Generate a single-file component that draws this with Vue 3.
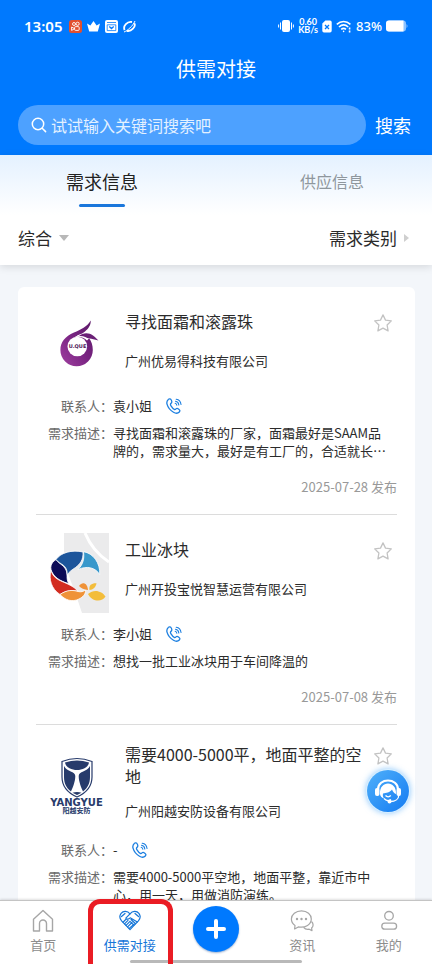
<template>
  <div class="page">
    <header class="header">
      <div class="status">
        <div class="status-side">
          <span class="time">13:05</span>
          <svg width="13" height="13" viewBox="0 0 13 13">
            <rect width="13" height="13" rx="2.5" fill="#e2502f" />
            <g fill="none" stroke="#fff" stroke-width=".9">
              <circle cx="5" cy="4" r="1.5" />
              <circle cx="8.6" cy="3.8" r="1.6" />
              <rect x="5.6" y="6.6" width="4.6" height="3.8" rx="1" />
              <path d="M2.6 7l3 1.7-3 1.7z" />
            </g>
          </svg>
          <svg width="13" height="13" viewBox="0 0 13 13" fill="#fff">
            <path d="M0 3.4l3.4 2L6.5 1l3.1 4.4 3.4-2-2.2 8.1H2.2z" />
          </svg>
          <svg width="13" height="13" viewBox="0 0 13 13">
            <rect width="13" height="13" rx="2" fill="#fff" />
            <path d="M2 2.5h9M2.2 4.8h8.6v5.8H2.2z" fill="none" stroke="#0079fe" stroke-width=".8" />
            <path d="M4.3 6.5l2.2 2 2.2-2" fill="none" stroke="#0079fe" stroke-width="1.3" />
          </svg>
          <svg width="13" height="13" viewBox="0 0 13 13" fill="none" stroke="#fff" stroke-width="1.8">
            <path d="M1.6 10C-.3 6 4.4 1 9 2M11.3 3.2c2 3.4-3 8.8-7.6 7.6" />
            <path d="M1 12c3-1 9-6 11-11" stroke-width="1" />
          </svg>
        </div>
        <div class="status-side status-right">
          <svg width="16" height="14" viewBox="0 0 16 14" fill="#fff">
            <rect x="4" y="1" width="8" height="12" rx="2" />
            <path d="M2.5 3.5v7M.6 5.5v3M13.5 3.5v7M15.4 5.5v3" stroke="#fff" stroke-width="1" />
          </svg>
          <span class="speed"><span>0.60</span><span>KB/s</span></span>
          <svg width="10" height="13" viewBox="0 0 10 13">
            <path d="M3.4.5H8A1.7 1.7 0 0 1 9.7 2.2v8.6A1.7 1.7 0 0 1 8 12.5H2A1.7 1.7 0 0 1 .3 10.8V3.6z" fill="#fff" />
            <path d="M3 5l4 4M7 5L3 9" stroke="#0079fe" stroke-width="1.3" />
          </svg>
          <svg width="16" height="13" viewBox="0 0 16 13" fill="none" stroke="#fff" stroke-width="1.6">
            <path d="M.8 4.3c4-3.7 9.6-3.7 13.6 0M3 7c2.8-2.6 6.4-2.6 9.2 0M5.2 9.4c1.5-1.3 3.3-1.3 4.8 0" />
            <circle cx="7.6" cy="11.4" r=".8" fill="#fff" stroke="none" />
            <path d="M13.6 7.5v2M13.6 10.5v2" />
          </svg>
          <span class="percent">83%</span>
          <svg width="22" height="12" viewBox="0 0 22 12">
            <rect x="0" y=".5" width="20" height="11" rx="3" fill="#8cc2ff" />
            <path d="M3 .5h14.5v11H3a3 3 0 0 1-3-3v-5a3 3 0 0 1 3-3z" fill="#fff" />
            <path d="M20.5 4a2.5 2.5 0 0 1 0 4z" fill="#8cc2ff" />
          </svg>
        </div>
      </div>
      <h1 class="page-title">供需对接</h1>
      <form class="search" @submit.prevent>
        <label class="search-box">
          <svg width="16" height="16" viewBox="0 0 16 16" fill="none" stroke="#fff" stroke-width="1.5" stroke-linecap="round">
            <circle cx="7" cy="7" r="5.7" />
            <path d="M11.2 11.2L14.6 14.6" />
          </svg>
          <input v-model="keyword" type="text" aria-label="搜索" placeholder="试试输入关键词搜索吧" />
        </label>
        <button class="search-button" type="submit">搜索</button>
      </form>
    </header>

    <section class="filters">
      <div class="tabs">
        <button
          v-for="(tab, index) in tabs"
          :key="tab"
          type="button"
          class="tab"
          :class="{ active: activeTab === index }"
          @click="activeTab = index"
        >
          {{ tab }}
        </button>
      </div>
      <div class="filter-row">
        <button type="button" class="filter">综合<i class="arrow-down"></i></button>
        <button type="button" class="filter">需求类别<i class="arrow-right"></i></button>
      </div>
    </section>

    <main class="content">
      <div class="card">
        <article v-for="item in items" :key="item.title" class="item">
          <div class="item-head">
            <svg v-if="item.logo === 'uque'" class="logo" viewBox="0 0 73 80">
              <defs>
                <linearGradient id="uque" x1="0" x2="1" y1="1" y2="0">
                  <stop offset="0" stop-color="#a040a0" />
                  <stop offset=".5" stop-color="#792482" />
                  <stop offset="1" stop-color="#5c1a68" />
                </linearGradient>
              </defs>
              <!-- flame and ring -->
              <path
                fill="url(#uque)"
                d="M54.7 15.5C51 22 45 24.5 38 27.5C29 31.5 24.4 37 24.4 45A16.2 16.2 0 0 0 56.8 45C56.8 40 55.5 36 52.5 32.5L46 31.5C44 30.5 41 30.8 38.500 32C42 30 46 29.5 49 26.5C52.500 23.500 55 20 54.7 15.5z"
              />
              <circle cx="41.3" cy="41.5" r="9.8" fill="#fff" />
              <path d="M38 32.500C41 30.500 44 29.500 46 28.800L53.500 33L51 35.500C47 31.500 42 31 38 32.500z" fill="#fff" />
              <path d="M43 31C47 27.500 53 27.500 57 30.500C59.500 32.300 60.500 34 62.500 35.500C58 34 56 34 53.500 33.500C50 33 48 30.500 43 31z" fill="#6a2076" />
              <text x="41.5" y="43" class="uque-text" text-anchor="middle">U.QUE</text>
            </svg>
            <svg v-else-if="item.logo === 'kaitou'" class="logo" viewBox="0 0 73 80">
              <path d="M28 0h45v80H46L40 62 28 30z" fill="#ebebec" />
              <path d="M49 0c5 12 13 22 24 29" fill="none" stroke="#fff" stroke-width="3" />
              <g stroke="#fff" stroke-width=".8">
                <path d="M20 26.500C14.500 30 13.500 35 16.500 40C20 46 27 49 32.800 50.500C29.500 45.500 32.500 41.500 29.500 36C27 31.500 23 31 20 26.500z" fill="#0c0b57" />
                <path d="M20 26.500C25 19.500 36 16.500 47 19C47.500 27 44 31 39.500 34.500C36 37 33 38.500 31.300 42C31.500 31 24 32 20 26.500z" fill="#1c559b" />
                <path d="M47.500 18.700C57 20 64.500 30 63.700 41.500C59.500 34.500 51 32.500 42 36.500C47 31.500 48.500 26 47.500 18.700z" fill="#3898cb" />
                <path d="M15 37.500C18.500 50 32 47.500 42 58C34 57 30 58 24 61.500C15.500 56 12.500 46.500 15 37.500z" fill="#d22c20" />
                <path d="M24 61.500C31 56.500 37 57 42 58.500C45 59.300 47.500 58.500 49.500 57C50 61 47 64 43 66C36 69.500 29 67 24 61.500z" fill="#ef9238" />
              </g>
              <path d="M43 53C46 49 51 49 52 57C48 56.500 45 55.500 43 53z" fill="#ef9238" />
              <path d="M53.500 57C52.500 52 56 50 60.500 50.300C60 54 57 57 53.500 57z" fill="#f3bd3b" />
              <path d="M52 61C58 55.500 66 58 69.500 63.500C66 69.500 56 69 52 61z" fill="#f3bd3b" />
            </svg>
            <svg v-else class="logo" viewBox="0 0 73 80">
              <path d="M41 15.500C46 15.500 51 16.500 56 18.500V34C56 44 50 50 41 54C32 50 26 44 26 34V18.500C31 16.500 36 15.500 41 15.500z" fill="#fff" stroke="#273b6b" stroke-width="1.2" />
              <path d="M29 19.500C37 16.800 45 16.800 53 19.500C52 25 46 27 41 27S30 25 29 19.500z" fill="#273b6b" />
              <path d="M28 23C31 29 39.300 28 39.300 33C39.300 39 36.500 45 35 48.500C30 44.500 28 40 28 34z" fill="#273b6b" />
              <path d="M54 23C51 29 42.700 28 42.700 33C42.700 39 45.500 45 47 48.500C52 44.500 54 40 54 34z" fill="#273b6b" />
              <path d="M36.500 49.800C39 48.800 43 48.800 45.500 49.800L41 52z" fill="#273b6b" />
              <text x="40.500" y="62.500" class="yue-text" text-anchor="middle">YANGYUE</text>
              <text x="40.500" y="69.500" class="yue-sub" text-anchor="middle">阳越安防</text>
            </svg>
            <div class="item-info">
              <div class="title-row">
                <h2 class="title">{{ item.title }}</h2>
                <button type="button" class="star" aria-label="收藏">
                  <svg width="18" height="18" viewBox="0 0 18 18" fill="none" stroke="#c3c3c3" stroke-width="1.3" stroke-linejoin="round">
                    <path d="M9 .9l2.500 5.200 5.800.8-4.200 4.100 1 5.900L9 14.100l-5.100 2.800 1-5.900L.7 6.900l5.800-.8z" />
                  </svg>
                </button>
              </div>
              <p class="company">{{ item.company }}</p>
            </div>
          </div>
          <div class="row">
            <span class="label">联系人：</span>
            <span>{{ item.contact }}</span>
            <button type="button" class="call" aria-label="拨打电话">
              <svg width="16" height="16" viewBox="0 0 16 16" fill="none" stroke="#1c7fe0" stroke-width="1.3" stroke-linecap="round" stroke-linejoin="round">
                <path d="M2.300 1.400C3.300.400 4.700.700 5.300 2C6 3.400 6.100 4.600 5 5.400C4.200 6 4.300 6.800 5 7.900C6 9.500 7.200 10.800 8.300 11.400C9 11.800 9.400 11.500 10 10.900C10.800 10.100 11.700 10.400 12.800 11.200C14.100 12.200 14.200 13 13.300 14C12 15.400 9.800 15.600 7.500 14.300C4.600 12.600 2 9.600 1.100 6.400C.500 4.300 1 2.600 2.300 1.400z" />
                <path d="M9.200 5.200C10.200 5.500 10.700 6.200 10.800 7.200M9.500 3.200C11.500 3.500 12.600 4.900 12.800 7M10.200 1.200C13 1.600 14.700 3.500 15 6.500" stroke-width="1.1" />
              </svg>
            </button>
          </div>
          <div class="row desc-row">
            <span class="label">需求描述：</span>
            <p class="desc">{{ item.desc }}</p>
          </div>
          <div class="date">{{ item.date }} 发布</div>
        </article>
      </div>
    </main>

    <button type="button" class="service" aria-label="在线客服">
      <svg width="30" height="30" viewBox="0 0 30 30">
        <path d="M5 13.500C5 1.500 25 1.500 25 13.500" fill="none" stroke="#fff" stroke-width="2.2" />
        <rect x="2" y="12" width="4.5" height="8" rx="2" fill="#fff" />
        <rect x="23.5" y="12" width="4.5" height="8" rx="2" fill="#fff" />
        <path d="M7 18C6 4 24 4 23 18C21.500 17.500 20 16 19 13.500C17 16.500 13 17 10 17.500C9.500 19.500 10 21 11 22.500C8.500 21.500 7.300 20 7 18z" fill="#fff" />
        <path d="M12.500 19.500c1.500 1.700 3.800 1.700 5.300 0M25.800 19c0 4-3.500 6.500-8.500 6.500M11 22.500c2 2 5 2.500 7 1" fill="none" stroke="#fff" stroke-width="1.3" />
        <circle cx="16.5" cy="25.5" r="2" fill="#fff" />
      </svg>
    </button>

    <nav class="tabbar">
      <a href="#" class="nav-item">
        <svg width="24" height="24" viewBox="0 0 24 24" fill="none" stroke="#a6a6a6" stroke-width="1.4" stroke-linejoin="round">
          <path d="M2.500 10.200L12 1.500l9.500 8.700V22h-6v-7.500a3.500 3.500 0 0 0-7 0V22h-6z" />
        </svg>
        <span>首页</span>
      </a>
      <a href="#" class="nav-item current">
        <svg width="24" height="24" viewBox="0 0 24 24" fill="none" stroke="#1576d8" stroke-width="1.2" stroke-linecap="round" stroke-linejoin="round">
          <path d="M12 4.800C9.500 1.800 5.300 1.600 3.100 4.300C1.300 6.700 1.600 9.500 3.600 11.800L12 20.700L20.400 11.800C22.400 9.500 22.700 6.700 20.900 4.300C18.700 1.600 14.500 1.800 12 4.800z" />
          <path d="M12 4.800L7.800 9.200C8.800 10.800 10.700 10.400 12.200 8.800L19.300 13M3.500 7.500L7 4.500M20.500 7.500L17 4.500M5 13.200L8 10.300M6.500 14.800L10 11.300M8 16.300L12 12.300M9.600 17.900L14 13.500M11.200 19.400L16 15.200M13 10.500L17.600 14.700M12 12.300L15.800 16.200" />
        </svg>
        <span>供需对接</span>
      </a>
      <button type="button" class="add" aria-label="发布">
        <svg width="22" height="22" viewBox="0 0 22 22" stroke="#fff" stroke-width="4" stroke-linecap="round">
          <path d="M11 3v16M3 11h16" />
        </svg>
      </button>
      <a href="#" class="nav-item">
        <svg width="24" height="24" viewBox="0 0 24 24" fill="none" stroke="#a6a6a6" stroke-width="1.2" stroke-linejoin="round">
          <path d="M11.500 1.800C5.800 1.800 1.400 5.400 1.400 10C1.400 12.700 2.800 15 5 16.500L4.600 20L8.300 17.900C15.600 19.200 21.300 15.300 21.300 10C21.300 5.400 17.200 1.800 11.500 1.800z" />
          <path d="M21.500 12.500C23.700 14.500 23.500 17.500 21.600 18.900L22 21.600L19.200 20.200C16.800 20.700 14.800 19.900 13.600 18.300" />
          <g fill="#a6a6a6" stroke="none">
            <circle cx="7" cy="10" r="1.2" />
            <circle cx="11.5" cy="10" r="1.2" />
            <circle cx="16" cy="10" r="1.2" />
          </g>
        </svg>
        <span>资讯</span>
      </a>
      <a href="#" class="nav-item">
        <svg width="24" height="24" viewBox="0 0 24 24" fill="none" stroke="#a6a6a6" stroke-width="1.3">
          <circle cx="12" cy="6.8" r="4.3" />
          <rect x="4.8" y="14.2" width="14.8" height="6" rx="3" />
        </svg>
        <span>我的</span>
      </a>
      <i class="home-bar"></i>
      <i class="marker"></i>
    </nav>
  </div>
</template>

<script setup>
import { ref } from "vue";

const keyword = ref("");
const tabs = ["需求信息", "供应信息"];
const activeTab = ref(0);

const items = [
  {
    logo: "uque",
    title: "寻找面霜和滚露珠",
    company: "广州优易得科技有限公司",
    contact: "袁小姐",
    desc: "寻找面霜和滚露珠的厂家，面霜最好是SAAM品牌的，需求量大，最好是有工厂的，合适就长期合作",
    date: "2025-07-28",
  },
  {
    logo: "kaitou",
    title: "工业冰块",
    company: "广州开投宝悦智慧运营有限公司",
    contact: "李小姐",
    desc: "想找一批工业冰块用于车间降温的",
    date: "2025-07-08",
  },
  {
    logo: "yangyue",
    title: "需要4000-5000平，地面平整的空地",
    company: "广州阳越安防设备有限公司",
    contact: "-",
    desc: "需要4000-5000平空地，地面平整，靠近市中心，用一天，用做消防演练。",
    date: "2025-07-08",
  },
];
</script>

<style>
body {
  margin: 0;
}
</style>

<style scoped>
.page {
  position: relative;
  display: flex;
  flex-direction: column;
  height: 100vh;
  overflow: hidden;
  background: #f3f6fa;
  color: #2b2b2b;
  font-family: "Noto Sans CJK SC", sans-serif;
  font-size: 13px;
  line-height: 20px;
}

button {
  padding: 0;
  border: none;
  background: none;
  color: inherit;
  font: inherit;
  cursor: pointer;
}

h1,
h2,
p {
  margin: 0;
  font-weight: 400;
}

svg {
  display: block;
  flex-shrink: 0;
}

/* Header */
.header {
  padding: 16px 18px 10px;
  background: #0079fe;
  color: #fff;
}

.status,
.status-side {
  display: flex;
  align-items: center;
}

.status {
  justify-content: space-between;
  padding: 0 6px;
}

.status-side {
  gap: 5px;
  font-family: Lato, "Noto Sans CJK SC", sans-serif;
}

.status-right {
  gap: 4px;
}

.time {
  margin-right: 2px;
  font-family: "Noto Sans", sans-serif;
  font-size: 15px;
  font-weight: 600;
}

.speed {
  display: flex;
  flex-direction: column;
  align-items: center;
  font-size: 9px;
  font-weight: 700;
  line-height: 8px;
}

.percent {
  font-family: "Noto Sans", sans-serif;
  font-size: 13px;
  font-weight: 500;
}

.page-title {
  margin: 18px 0 21px;
  font-size: 20px;
  line-height: 30px;
  text-align: center;
}

.search {
  display: flex;
  align-items: center;
  gap: 9px;
}

.search-box {
  display: flex;
  flex: 1;
  align-items: center;
  gap: 4px;
  height: 40px;
  padding: 0 13px;
  border-radius: 20px;
  background: #4da1ff;
}

.search-box input {
  flex: 1;
  min-width: 0;
  padding: 0;
  border: none;
  outline: none;
  background: none;
  color: #fff;
  font: inherit;
  font-size: 16px;
}

.search-box input::placeholder {
  color: #e4f1ff;
  opacity: 1;
}

.search-button {
  padding-right: 3px;
  font-size: 18px;
}

/* Tabs and filters */
.filters {
  position: relative;
  background: linear-gradient(#e4f1ff, #fff 60px);
  box-shadow: 0 2px 8px rgba(0, 0, 0, 0.12);
}

.tabs {
  display: flex;
  justify-content: space-between;
  padding: 0 68px 0 66px;
}

.tab {
  display: flex;
  flex-direction: column;
  align-items: center;
  padding-top: 13px;
  color: #8f979d;
  font-size: 16px;
  line-height: 26px;
}

.tab::after {
  content: "";
  width: 46px;
  height: 3px;
  margin-top: 10px;
  border-radius: 2px;
}

.tab.active {
  color: #222;
  font-size: 18px;
}

.tab.active::after {
  background: #1a77dc;
}

.filter-row {
  display: flex;
  justify-content: space-between;
  padding: 18px 23px 15px 18px;
}

.filter {
  display: flex;
  align-items: center;
  gap: 7px;
  font-size: 17px;
  line-height: 25px;
}

.arrow-down {
  border: 5px solid transparent;
  border-top: 6px solid #b8b8b8;
  border-bottom: none;
}

.arrow-right {
  border: 4px solid transparent;
  border-left: 5px solid #cfcfcf;
  border-right: none;
}

/* List */
.content {
  flex: 1;
  min-height: 0;
  padding: 22px 17px 0 18px;
  overflow: hidden;
}

.card {
  padding: 0 18px;
  border-radius: 6px;
  background: #fff;
}

.item {
  padding: 18px 0 17px;
}

.item + .item {
  border-top: 1px solid #dcdcdc;
}

.item-head {
  display: flex;
  gap: 16px;
}

.logo {
  width: 73px;
  height: 80px;
}

.uque-text {
  fill: #4c1658;
  font: 900 5px "DejaVu Sans", sans-serif;
}

.yue-text {
  fill: #273b6b;
  font: 700 10px "DejaVu Sans", sans-serif;
}

.yue-sub {
  fill: #273b6b;
  font: 700 7px "Noto Sans CJK SC", sans-serif;
}

.item-info {
  display: flex;
  flex: 1;
  flex-direction: column;
  gap: 14px;
  padding-bottom: 8px;
}

.title-row {
  display: grid;
  grid-template-columns: 1fr 28px;
  align-content: center;
  min-height: 32px;
}

.title {
  font-size: 16px;
  line-height: 22px;
}

.star {
  display: flex;
  align-self: start;
  justify-content: center;
  padding-top: 4px;
}

.row {
  display: flex;
  align-items: center;
  margin-top: 11px;
}

.label {
  flex-shrink: 0;
  width: 77px;
  color: #6a6a6a;
  text-align: right;
}

.call {
  margin-left: 14px;
}

.desc-row {
  align-items: flex-start;
  margin-top: 8px;
  padding-right: 6px;
  line-height: 18px;
}

.desc {
  display: -webkit-box;
  overflow: hidden;
  -webkit-box-orient: vertical;
  -webkit-line-clamp: 2;
}

.date {
  margin-top: 17px;
  color: #999;
  text-align: right;
}

/* Floating customer service button */
.service {
  position: absolute;
  right: 23px;
  bottom: 152px;
  display: flex;
  align-items: center;
  justify-content: center;
  width: 42px;
  height: 42px;
  border-radius: 50%;
  background: linear-gradient(135deg, #4fb0fa, #147bf2);
  box-shadow: 0 0 0 1px #d9f0ff, 0 0 6px 1px rgba(60, 160, 250, 0.6);
}

/* Bottom navigation */
.tabbar {
  position: relative;
  display: flex;
  align-items: flex-start;
  height: 63px;
  border-top: 1px solid #c4c4c4;
  background: #fff;
  box-shadow: 0 -1px 2px rgba(0, 0, 0, 0.12);
}

.nav-item {
  display: flex;
  flex: 1;
  flex-direction: column;
  align-items: center;
  gap: 2px;
  padding-top: 8px;
  color: #8d8d8d;
  text-decoration: none;
}

.nav-item.current {
  color: #1576d8;
}

.add {
  display: flex;
  align-items: center;
  justify-content: center;
  width: 46px;
  height: 46px;
  margin: 5px 20px 0;
  border-radius: 50%;
  background: #0079fe;
  box-shadow: 0 1px 2px rgba(0, 60, 140, 0.4);
}

.home-bar {
  position: absolute;
  bottom: 1px;
  left: 30%;
  width: 40%;
  height: 3px;
  border-radius: 2px;
  background: #b9b9b9;
}

/* Red outline around the current entry */
.marker {
  position: absolute;
  top: -2px;
  bottom: 0;
  left: calc(20% + 2px);
  box-sizing: border-box;
  width: 85px;
  border: 5px solid #ea1c24;
  border-bottom: none;
  border-radius: 12px 12px 0 0;
}
</style>
